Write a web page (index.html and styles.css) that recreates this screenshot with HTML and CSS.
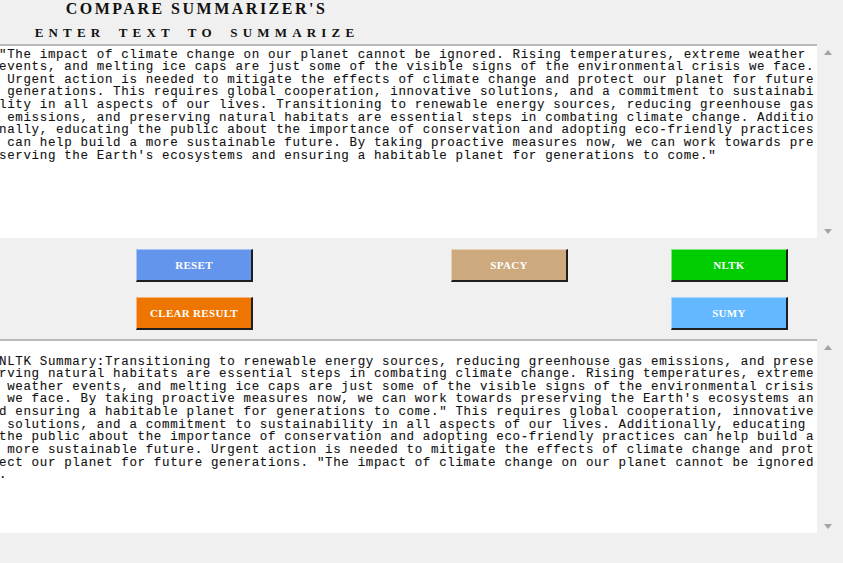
FILE: index.html
```html
<!DOCTYPE html>
<html lang="en">
<head>
<meta charset="utf-8">
<title>Compare Summarizer's</title>
<link rel="stylesheet" href="styles.css">
</head>
<body>
<div class="app">
  <header class="header">
    <h1 class="title">COMPARE SUMMARIZER'S</h1>
    <h2 class="subtitle">ENTER TEXT TO SUMMARIZE</h2>
  </header>

  <section class="pane">
    <div class="textbox">
      <div class="line">"The impact of climate change on our planet cannot be ignored. Rising temperatures, extreme weather </div>
      <div class="line">events, and melting ice caps are just some of the visible signs of the environmental crisis we face.</div>
      <div class="line"> Urgent action is needed to mitigate the effects of climate change and protect our planet for future</div>
      <div class="line"> generations. This requires global cooperation, innovative solutions, and a commitment to sustainabi</div>
      <div class="line">lity in all aspects of our lives. Transitioning to renewable energy sources, reducing greenhouse gas</div>
      <div class="line"> emissions, and preserving natural habitats are essential steps in combating climate change. Additio</div>
      <div class="line">nally, educating the public about the importance of conservation and adopting eco-friendly practices</div>
      <div class="line"> can help build a more sustainable future. By taking proactive measures now, we can work towards pre</div>
      <div class="line">serving the Earth's ecosystems and ensuring a habitable planet for generations to come."</div>
    </div>
    <div class="scrollbar">
      <svg class="arrow" viewBox="0 0 8 5" width="8" height="5"><polygon points="0,5 4,0 8,5"/></svg>
      <svg class="arrow" viewBox="0 0 8 5" width="8" height="5"><polygon points="0,0 8,0 4,5"/></svg>
    </div>
  </section>

  <section class="controls">
    <button class="btn btn-reset">RESET</button>
    <button class="btn btn-spacy">SPACY</button>
    <button class="btn btn-nltk">NLTK</button>
    <button class="btn btn-clear">CLEAR RESULT</button>
    <button class="btn btn-sumy">SUMY</button>
  </section>

  <section class="pane">
    <div class="textbox textbox-result">
      <div class="line">NLTK Summary:Transitioning to renewable energy sources, reducing greenhouse gas emissions, and prese</div>
      <div class="line">rving natural habitats are essential steps in combating climate change. Rising temperatures, extreme</div>
      <div class="line"> weather events, and melting ice caps are just some of the visible signs of the environmental crisis</div>
      <div class="line"> we face. By taking proactive measures now, we can work towards preserving the Earth's ecosystems an</div>
      <div class="line">d ensuring a habitable planet for generations to come." This requires global cooperation, innovative</div>
      <div class="line"> solutions, and a commitment to sustainability in all aspects of our lives. Additionally, educating </div>
      <div class="line">the public about the importance of conservation and adopting eco-friendly practices can help build a</div>
      <div class="line"> more sustainable future. Urgent action is needed to mitigate the effects of climate change and prot</div>
      <div class="line">ect our planet for future generations. "The impact of climate change on our planet cannot be ignored</div>
      <div class="line">.</div>
    </div>
    <div class="scrollbar">
      <svg class="arrow" viewBox="0 0 8 5" width="8" height="5"><polygon points="0,5 4,0 8,5"/></svg>
      <svg class="arrow" viewBox="0 0 8 5" width="8" height="5"><polygon points="0,0 8,0 4,5"/></svg>
    </div>
  </section>
</div>
</body>
</html>
```

FILE: styles.css
```css
html, body {
  margin: 0;
  padding: 0;
}

body {
  background: #f0f0f0;
  width: 843px;
  height: 563px;
  overflow: hidden;
  font-family: "Liberation Serif", "Times New Roman", serif;
  color: #000;
}

.app {
  display: flex;
  flex-direction: column;
}

.header {
  width: 390px;
  text-align: center;
}

.title {
  margin: 0;
  font-size: 16px;
  line-height: 18px;
  font-weight: bold;
  letter-spacing: 2.5px;
  padding-left: 3px;
  color: #111;
}

.subtitle {
  margin: 6px 0 0;
  font-size: 13px;
  line-height: 17px;
  font-weight: bold;
  letter-spacing: 5.2px;
  word-spacing: 5px;
  padding-left: 4px;
  color: #111;
}

.pane {
  display: flex;
  height: 194px;
  margin-top: 3px;
}

.pane + .controls + .pane {
  margin-top: 0;
}

.textbox {
  flex: 0 0 817px;
  box-sizing: border-box;
  background: #fff;
  border-top: 2px solid #b9b9b9;
  padding-top: 2.5px;
  overflow: hidden;
  font-family: "Liberation Mono", "Courier New", monospace;
  font-size: 12.5px;
  line-height: 12.65px;
  letter-spacing: 0.65px;
  color: #111;
  -webkit-text-stroke: 0.1px #111;
}

.textbox-result {
  padding-top: 14.5px;
}

.line {
  white-space: pre;
  margin-left: -1px;
}

.scrollbar {
  flex: 1;
  display: flex;
  flex-direction: column;
  justify-content: space-between;
  align-items: center;
  padding: 6px 4px 4px 0;
}

.arrow {
  display: block;
  fill: #a3a3a3;
}

.controls {
  display: grid;
  grid-template-columns: 136px 117px 198px 117px 103px 117px;
  grid-template-rows: 33px 33px;
  row-gap: 15px;
  padding: 11px 0 9px;
}

.btn {
  box-sizing: border-box;
  width: 117px;
  height: 33px;
  margin: 0;
  padding: 0;
  font-family: "Liberation Serif", "Times New Roman", serif;
  font-size: 11px;
  font-weight: bold;
  letter-spacing: 0.3px;
  color: #fff;
  border-style: solid;
  border-width: 1px 2px 2px 1px;
  border-right-color: #1e1e1e;
  border-bottom-color: #1e1e1e;
}

.btn-reset {
  grid-column: 2;
  grid-row: 1;
  background: #6495ed;
  border-top-color: #a9c4f5;
  border-left-color: #a9c4f5;
}

.btn-spacy {
  grid-column: 4;
  grid-row: 1;
  background: #cdaa7d;
  border-top-color: #e6d2b6;
  border-left-color: #e6d2b6;
}

.btn-nltk {
  grid-column: 6;
  grid-row: 1;
  background: #00cd00;
  border-top-color: #7fe67f;
  border-left-color: #7fe67f;
}

.btn-clear {
  grid-column: 2;
  grid-row: 2;
  background: #ee7600;
  border-top-color: #f6b87a;
  border-left-color: #f6b87a;
}

.btn-sumy {
  grid-column: 6;
  grid-row: 2;
  background: #63b8ff;
  border-top-color: #a9d8ff;
  border-left-color: #a9d8ff;
}
```
